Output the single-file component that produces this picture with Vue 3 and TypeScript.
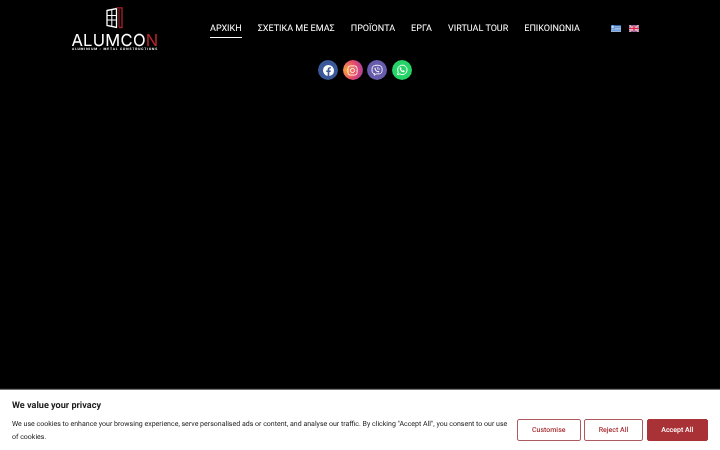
<script setup lang="ts">
const navItems = ['ΑΡΧΙΚΗ', 'ΣΧΕΤΙΚΑ ΜΕ ΕΜΑΣ', 'ΠΡΟΪΟΝΤΑ', 'ΕΡΓΑ', 'VIRTUAL TOUR', 'ΕΠΙΚΟΙΝΩΝΙΑ']
</script>

<template>
  <div class="page">
    <header class="header">
      <a class="logo">
        <svg class="logo-mark" viewBox="0 0 18 22" width="18" height="22">
          <path d="M1 3.500 L10.500 1.500 V20.500 L1 18.500 Z" fill="none" stroke="#fff" stroke-width="1.300" />
          <path d="M1 8.500 H10.500 M1 13 H10.500 M5.800 3 V19" fill="none" stroke="#fff" stroke-width="1" />
          <path d="M10.500 .8 H16 V20.500 H13" fill="none" stroke="#a8242a" stroke-width="1.300" />
          <path d="M13 2 V20" fill="none" stroke="#8e1f25" stroke-width="1.200" />
        </svg>
        <div class="logo-name">ALUMCO<span>N</span></div>
        <div class="logo-sub">ALUMINIUM - METAL CONSTRUCTIONS</div>
      </a>

      <nav class="nav">
        <a v-for="(item, i) in navItems" :key="item" class="nav-link" :class="{ active: i === 0 }">{{ item }}</a>
      </nav>

      <div class="flags">
        <svg viewBox="0 0 9 6" width="10" height="7">
          <rect width="9" height="6" fill="#2d6fc4" />
          <path d="M0 1.500H9M0 2.850H9M0 4.200H9M0 5.500H9" stroke="#fff" stroke-width=".6" />
          <rect width="3.400" height="3.200" fill="#2d6fc4" />
          <path d="M1.700 0V3.200M0 1.600H3.400" stroke="#fff" stroke-width=".7" />
        </svg>
        <svg viewBox="0 0 20 14" width="10" height="7">
          <rect width="20" height="14" fill="#3f4f9e" />
          <path d="M0 0L20 14M20 0L0 14" stroke="#fff" stroke-width="3" />
          <path d="M0 0L20 14M20 0L0 14" stroke="#e0314f" stroke-width="1.400" />
          <path d="M10 0V14M0 7H20" stroke="#fff" stroke-width="4.500" />
          <path d="M10 0V14M0 7H20" stroke="#e0224a" stroke-width="3" />
        </svg>
      </div>
    </header>

    <div class="socials">
      <a class="social fb">
        <svg viewBox="0 0 24 24" width="11" height="11">
          <path fill="#fff" d="M24 12a12 12 0 1 0-13.900 11.900v-8.400H7.100V12h3V9.400c0-3 1.800-4.700 4.500-4.700 1.300 0 2.700.2 2.700.2v3h-1.500c-1.500 0-2 .9-2 1.900V12h3.300l-.5 3.500h-2.800v8.400A12 12 0 0 0 24 12z" />
        </svg>
      </a>
      <a class="social ig">
        <svg viewBox="0 0 24 24" width="11" height="11" fill="none" stroke="#fff" stroke-width="2">
          <rect x="2" y="2" width="20" height="20" rx="5.500" />
          <circle cx="12" cy="12" r="4.600" />
          <circle cx="17.800" cy="6.200" r="1" fill="#fff" stroke="none" />
        </svg>
      </a>
      <a class="social vb">
        <svg viewBox="0 0 24 24" width="12" height="12" fill="none" stroke="#fff" stroke-width="1.800" stroke-linecap="round">
          <path d="M6.500 19.500 V22.500 L10 19.800 C15 20.100 19 19.700 20.800 17.800 C22.800 15.500 22.800 7.500 20.800 5 C18.500 1.600 6 1.600 3.500 5 C1.500 7.500 1.500 15.500 3.500 17.800 C4.200 18.600 5.300 19.200 6.500 19.500 Z" />
          <path d="M8.200 6.800 L9.800 8.900 L8.900 10.200 C9.800 12.300 11.300 13.700 13.400 14.600 L14.700 13.600 L16.800 15.300 C16 16.700 14.800 17 13.800 16.600 C10.500 15.300 8 12.700 6.900 9.500 C6.600 8.300 7 7.300 8.200 6.800 Z" fill="#fff" stroke="none" />
          <path d="M12.500 6.500 C15 6.700 16.800 8.500 17 11 M12.800 9 C13.800 9.100 14.400 9.700 14.500 10.700" stroke-width="1.200" />
        </svg>
      </a>
      <a class="social wa">
        <svg viewBox="0 0 24 24" width="12" height="12">
          <path fill="none" stroke="#fff" stroke-width="2" d="M3 21.300 L4.400 16.400 A9.500 9.500 0 1 1 7.800 19.900 Z" />
          <path fill="#fff" d="M8.600 6.900c.7-.6 1.300-.5 1.600.2l.7 1.600c.1.400 0 .8-.8 1.700.8 1.500 2 2.600 3.500 3.300.8-1 1.200-1.200 1.700-1l1.700.8c.6.300.6.900.2 1.600-.7 1.100-2.100 1.600-3.400 1.200-3.100-.9-5.500-3.300-6.400-6.300-.2-1.100.2-2.200.9-3.100z" />
        </svg>
      </a>
    </div>

    <section class="cookie">
      <p class="cookie-title">We value your privacy</p>
      <div class="cookie-body">
        <p class="cookie-text">We use cookies to enhance your browsing experience, serve personalised ads or content, and analyse our traffic. By clicking "Accept All", you consent to our use of cookies.</p>
        <div class="cookie-actions">
          <button class="btn btn-custom">Customise</button>
          <button class="btn btn-reject">Reject All</button>
          <button class="btn btn-accept">Accept All</button>
        </div>
      </div>
    </section>
  </div>
</template>

<style>
html,
body {
  background: #000;
}
</style>

<style scoped>
.page {
  width: 720px;
  height: 450px;
  background: #000;
  position: relative;
  overflow: hidden;
  font-family: Roboto, "Liberation Sans", sans-serif;
  text-rendering: geometricPrecision;
  filter: blur(0.3px);
}

.header {
  display: flex;
  align-items: flex-start;
  padding: 7px 0 0 70px;
  height: 50px;
  box-sizing: border-box;
}

.logo {
  width: 90px;
  display: flex;
  flex-direction: column;
  align-items: center;
  color: #fff;
}

.logo-mark {
  display: block;
}

.logo-name {
  font-family: Inter, Roboto, sans-serif;
  font-size: 16.500px;
  line-height: 13px;
  letter-spacing: 0.3px;
  margin-top: 5px;
  font-weight: 400;
  white-space: nowrap;
}

.logo-name span {
  color: #b3262c;
}

.logo-sub {
  font-size: 3.300px;
  line-height: 4px;
  letter-spacing: 0.860px;
  font-weight: 700;
  white-space: nowrap;
}

.nav {
  display: flex;
  gap: 16px;
  margin-left: 50px;
  padding-top: 15px;
}

.nav-link {
  color: #fff;
  font-size: 9.040px;
  line-height: 15px;
  white-space: nowrap;
  border-bottom: 1px solid transparent;
}

.nav-link.active {
  border-bottom-color: #fff;
}

.flags {
  display: flex;
  gap: 8px;
  margin-left: 31px;
  padding-top: 18px;
}

.flags svg {
  display: block;
}

.socials {
  display: flex;
  justify-content: center;
  gap: 4.500px;
  margin-top: 10px;
  padding-left: 10px;
}

.social {
  width: 20px;
  height: 20px;
  border-radius: 50%;
  display: flex;
  align-items: center;
  justify-content: center;
}

.fb {
  background: #3b5998;
}

.ig {
  background: radial-gradient(circle at 15% 50%, #f7a03c 0%, #e5486c 55%, #8a3fb0 100%);
}

.vb {
  background: #665cac;
}

.wa {
  background: #25d366;
}

.cookie {
  position: absolute;
  left: 0;
  right: 0;
  bottom: 0;
  height: 60px;
  box-sizing: border-box;
  background: #fff;
  padding: 10px 12px 0;
  box-shadow: 0 -1px 1px rgba(255, 255, 255, 0.45);
}

.cookie-title {
  margin: 0 0 5px;
  font-size: 9.100px;
  line-height: 12px;
  font-weight: 700;
  color: #212121;
}

.cookie-body {
  display: flex;
  align-items: flex-start;
  gap: 8px;
}

.cookie-text {
  margin: 0;
  flex: 1;
  font-size: 7.020px;
  line-height: 13px;
  color: #212121;
}

.cookie-actions {
  display: flex;
  gap: 3.500px;
  flex-shrink: 0;
  margin-top: 2px;
}

.btn {
  height: 22px;
  padding: 0;
  border-radius: 2px;
  border: 1.500px solid #ad5a60;
  font-family: inherit;
  font-size: 7px;
  font-weight: 500;
  color: #a83236;
  background: #fff;
  text-rendering: geometricPrecision;
}

.btn-custom {
  width: 63.500px;
}

.btn-reject {
  width: 59px;
}

.btn-accept {
  width: 61.500px;
  background: #a83236;
  border-color: #a83236;
  color: #fff;
}
</style>
